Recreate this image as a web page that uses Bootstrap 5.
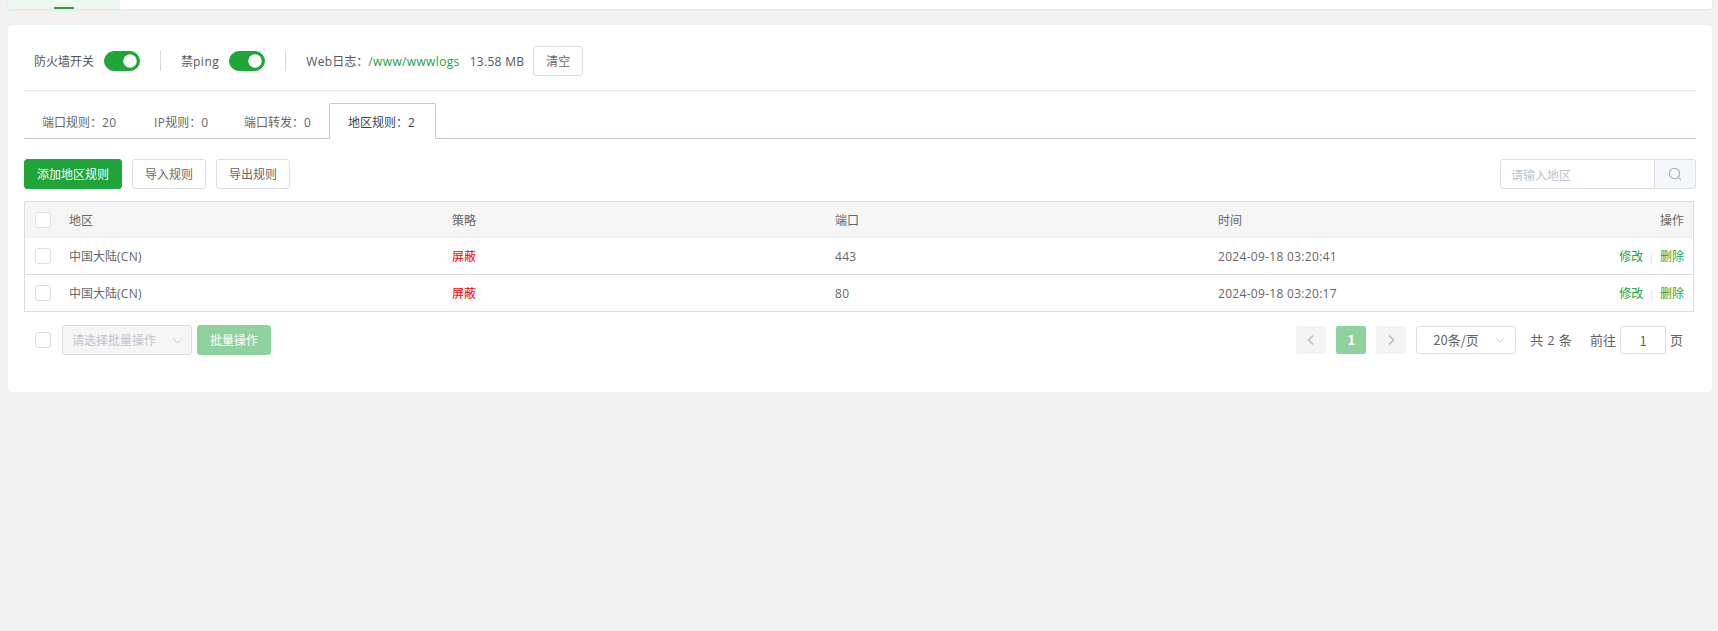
<!DOCTYPE html>
<html lang="zh-CN">
<head>
<meta charset="utf-8">
<title>系统防火墙</title>
<link href="https://cdn.jsdelivr.net/npm/bootstrap@5.3.0/dist/css/bootstrap.min.css" rel="stylesheet">
<style>
html,body{height:100%;}
body{background:#f1f1f1;font-family:"Noto Sans CJK SC","Noto Sans",sans-serif;font-size:12px;color:#666;padding:0 6px 0 8px;overflow:hidden;}
.lat{font-family:"Open Sans","Noto Sans CJK SC",sans-serif;letter-spacing:.3px;}
.lat-ping{letter-spacing:.5px;}
.top-strip{height:9px;background:#fff;border-radius:0 0 4px 4px;box-shadow:0 1px 3px rgba(0,0,0,.05);margin-bottom:16px;}
.top-tab{width:112px;height:9px;background:#eef8f0;border-radius:0 0 0 4px;}
.top-mark{width:20px;height:2px;background:#20a53a;margin-left:46px;position:relative;top:7px;}
.main-panel{height:367px;background:#fff;border:0;border-radius:4px;padding:21px 16px 0;color:#666;}
.tool-row{height:30px;padding-left:10px;color:#555;}
.form-switch .sw{width:36px;height:20px;margin:0 0 0 10px;float:none;background-color:#20a53a;border-color:#20a53a;box-shadow:none;}
.v-sep{width:1px;height:20px;background:#d8d8d8;margin:0 20px;}
.path-link{color:#20a53a;text-decoration:none;}
.path-link .lat{letter-spacing:.35px;}
.size-txt{margin:0 9px 0 10px;color:#555;}
.btn-plain{height:30px;font-size:12px;line-height:1;padding:0 12px;color:#666;background:#fff;border:1px solid #dcdfe6;border-radius:3px;}
.btn-green{height:30px;font-size:12px;line-height:1;padding:0 12px;color:#fff;background:#20a53a;border:1px solid #20a53a;border-radius:3px;}
.tool-rule{height:1px;background:#e8e8e8;margin:14px 0 12px;}
.tab-row{height:36px;border-bottom:1px solid #c9c6d9;margin-bottom:20px;flex-wrap:nowrap;}
.tab-row .nav-link{height:36px;padding:0 0 0 17px;font-size:12px;line-height:35px;color:#666;border:1px solid transparent;border-radius:0;margin:0;white-space:nowrap;}
.tab-row .nav-link.active{color:#444;background:#fff;border:1px solid #c9c6d9;border-bottom-color:#fff;border-radius:2px 2px 0 0;}
.tab-row .t1{width:111px;}
.tab-row .t2{width:90px;padding-left:18px;}
.tab-row .t3{width:104px;padding-left:18px;}
.tab-row .t4{width:107px;padding-left:18px;}
.action-row{height:30px;margin-bottom:12px;}
.action-gap{gap:10px;}
.find-box{width:196px;height:30px;flex-wrap:nowrap;}
.find-box .form-control{height:30px;min-height:30px;font-size:12px;padding:0 10px;border-color:#dcdfe6;border-radius:3px 0 0 3px;box-shadow:none;}
.find-box .form-control::placeholder{color:#c0c4cc;}
.find-btn{width:42px;padding:0;background:#f5f7fa;border:1px solid #dcdfe6;border-radius:0 3px 3px 0;}
.rule-table{width:1670px;table-layout:fixed;margin:0;border:1px solid #ddd;font-size:12px;--bs-table-color:#666;color:#666;border-collapse:separate;border-spacing:0;}
.rule-table th,.rule-table td{padding:0 9px 0 13px;vertical-align:middle;font-weight:400;border:0;border-bottom:1px solid #ddd;height:37px;box-shadow:none;}
.rule-table tr:last-child td{border-bottom:0;height:36px;}
.rule-table thead th{background:#f5f5f5;border-bottom:1px solid #eceef3;height:36px;}
.rule-table .cell-check{width:31px;padding:0 0 0 10px;}
.rule-table .col-w{width:383px;}
.tick{width:16px;height:16px;margin:0;display:block;border:1px solid #dcdfe6;border-radius:2px;box-shadow:none;}
.rule-table td.deny{color:#f00;}
.act{color:#20a53a;text-decoration:none;}
.act-sep{color:#d8d8d8;margin:0 7px;font-size:10px;}
.foot-row{margin-top:13px;height:30px;padding-left:11px;}
.batch-select{width:130px;height:30px;margin-left:11px;font-size:12px;padding:0 26px 0 9px;color:#c0c4cc;background-color:#f5f5f5;border:1px solid #ddd;border-radius:3px;background-size:13px 13px;background-position:right 7px center;background-image:url("data:image/svg+xml,%3csvg xmlns='http://www.w3.org/2000/svg' viewBox='0 0 14 14'%3e%3cpath fill='none' stroke='%23c0c4cc' d='M2 4.500l5 5 5-5'/%3e%3c/svg%3e");}
.batch-select:disabled{background-color:#f5f5f5;color:#c0c4cc;}
.btn.batch-btn,.btn.batch-btn:disabled{width:74px;height:30px;margin-left:5px;padding:0;font-size:12px;color:#fff;background:#90d29d;border:1px solid #90d29d;border-radius:3px;opacity:1;}
.pager{margin:0;gap:10px;height:28px;}
.pager .page-item .page-link{width:30px;height:28px;margin:0;padding:0;display:flex;align-items:center;justify-content:center;font-size:13px;background:#f4f4f5;border:0;border-radius:2px;color:#c0c4cc;}
.pager .page-item.active .page-link{background:#90d29d;color:#fff;font-weight:700;}
.pager-wrap{height:28px;margin-right:13px;}
.size-select{width:100px;height:28px;margin-left:10px;font-size:13px;padding:0 20px 0 16px;color:#606266;background-color:#fff;border:1px solid #dcdfe6;border-radius:3px;box-shadow:none;background-size:12px 12px;background-position:right 9px center;background-image:url("data:image/svg+xml,%3csvg xmlns='http://www.w3.org/2000/svg' viewBox='0 0 14 14'%3e%3cpath fill='none' stroke='%23c0c4cc' d='M2.500 5l4.500 4.500L11.500 5'/%3e%3c/svg%3e");}
.total{font-size:13px;color:#606266;margin-left:14px;margin-right:18px;white-space:nowrap;}
.jump{font-size:13px;color:#606266;white-space:nowrap;}
.jump-input{width:46px;height:28px;min-height:28px;margin:0 4px;padding:0;text-align:center;font-size:13px;color:#606266;border:1px solid #dcdfe6;border-radius:3px;box-shadow:none;}
</style>
</head>
<body>
<div class="top-strip"><div class="top-tab"><div class="top-mark"></div></div></div>

<div class="card main-panel">
  <div class="d-flex align-items-center tool-row">
    <span>防火墙开关</span>
    <div class="form-check form-switch m-0 p-0 d-flex align-items-center"><input class="form-check-input sw" type="checkbox" role="switch" checked aria-label="防火墙开关"></div>
    <span class="v-sep"></span>
    <span>禁<span class="lat lat-ping">ping</span></span>
    <div class="form-check form-switch m-0 p-0 d-flex align-items-center"><input class="form-check-input sw" type="checkbox" role="switch" checked aria-label="禁ping"></div>
    <span class="v-sep"></span>
    <span><span class="lat">Web</span>日志：</span><a class="path-link" href="#"><span class="lat">/www/wwwlogs</span></a><span class="size-txt"><span class="lat">13.58 MB</span></span>
    <button type="button" class="btn btn-plain">清空</button>
  </div>
  <div class="tool-rule"></div>

  <ul class="nav nav-tabs tab-row">
    <li class="nav-item"><a class="nav-link t1" href="#">端口规则：<span class="lat">20</span></a></li>
    <li class="nav-item"><a class="nav-link t2" href="#"><span class="lat">IP</span>规则：<span class="lat">0</span></a></li>
    <li class="nav-item"><a class="nav-link t3" href="#">端口转发：<span class="lat">0</span></a></li>
    <li class="nav-item"><a class="nav-link active t4" href="#">地区规则：<span class="lat">2</span></a></li>
  </ul>

  <div class="d-flex justify-content-between action-row">
    <div class="d-flex action-gap">
      <button type="button" class="btn btn-green">添加地区规则</button>
      <button type="button" class="btn btn-plain">导入规则</button>
      <button type="button" class="btn btn-plain">导出规则</button>
    </div>
    <div class="input-group find-box">
      <input type="text" class="form-control" placeholder="请输入地区" aria-label="请输入地区">
      <button type="button" class="btn find-btn d-flex align-items-center justify-content-center" aria-label="搜索">
        <svg width="14" height="14" viewBox="0 0 14 14" fill="none" stroke="#a8abb2" stroke-width="1.1"><circle cx="6.500" cy="6.500" r="5.200"/><path d="M10.300 10.300L12.800 12.800"/></svg>
      </button>
    </div>
  </div>

  <table class="table rule-table">
    <thead>
      <tr>
        <th class="cell-check"><input class="form-check-input tick" type="checkbox" aria-label="全选"></th>
        <th class="col-w">地区</th>
        <th class="col-w">策略</th>
        <th class="col-w">端口</th>
        <th>时间</th>
        <th class="text-end">操作</th>
      </tr>
    </thead>
    <tbody>
      <tr>
        <td class="cell-check"><input class="form-check-input tick" type="checkbox" aria-label="选择"></td>
        <td>中国大陆<span class="lat">(CN)</span></td>
        <td class="deny">屏蔽</td>
        <td><span class="lat">443</span></td>
        <td><span class="lat">2024-09-18 03:20:41</span></td>
        <td class="text-end"><a class="act" href="#">修改</a><span class="act-sep">|</span><a class="act" href="#">删除</a></td>
      </tr>
      <tr>
        <td class="cell-check"><input class="form-check-input tick" type="checkbox" aria-label="选择"></td>
        <td>中国大陆<span class="lat">(CN)</span></td>
        <td class="deny">屏蔽</td>
        <td><span class="lat">80</span></td>
        <td><span class="lat">2024-09-18 03:20:17</span></td>
        <td class="text-end"><a class="act" href="#">修改</a><span class="act-sep">|</span><a class="act" href="#">删除</a></td>
      </tr>
    </tbody>
  </table>

  <div class="d-flex align-items-center foot-row">
    <input class="form-check-input tick" type="checkbox" aria-label="全选">
    <select class="form-select batch-select" disabled aria-label="批量操作"><option>请选择批量操作</option></select>
    <button type="button" class="btn batch-btn" disabled>批量操作</button>
    <div class="d-flex align-items-center ms-auto pager-wrap">
      <ul class="pagination pager">
        <li class="page-item"><a class="page-link" href="#" aria-label="上一页"><svg width="10" height="12" viewBox="0 0 10 12" fill="none" stroke="#c0c4cc" stroke-width="1.800"><path d="M7 1.500L2.500 6 7 10.500"/></svg></a></li>
        <li class="page-item active"><a class="page-link" href="#">1</a></li>
        <li class="page-item"><a class="page-link" href="#" aria-label="下一页"><svg width="10" height="12" viewBox="0 0 10 12" fill="none" stroke="#c0c4cc" stroke-width="1.800"><path d="M3 1.500L7.500 6 3 10.500"/></svg></a></li>
      </ul>
      <select class="form-select size-select" aria-label="每页条数"><option>20条/页</option></select>
      <span class="total"><span class="lat">共 2 条</span></span>
      <span class="jump d-flex align-items-center">前往<input class="form-control jump-input" type="text" value="1" aria-label="页码">页</span>
    </div>
  </div>
</div>
<script src="https://cdn.jsdelivr.net/npm/bootstrap@5.3.0/dist/js/bootstrap.bundle.min.js"></script>
</body>
</html>
